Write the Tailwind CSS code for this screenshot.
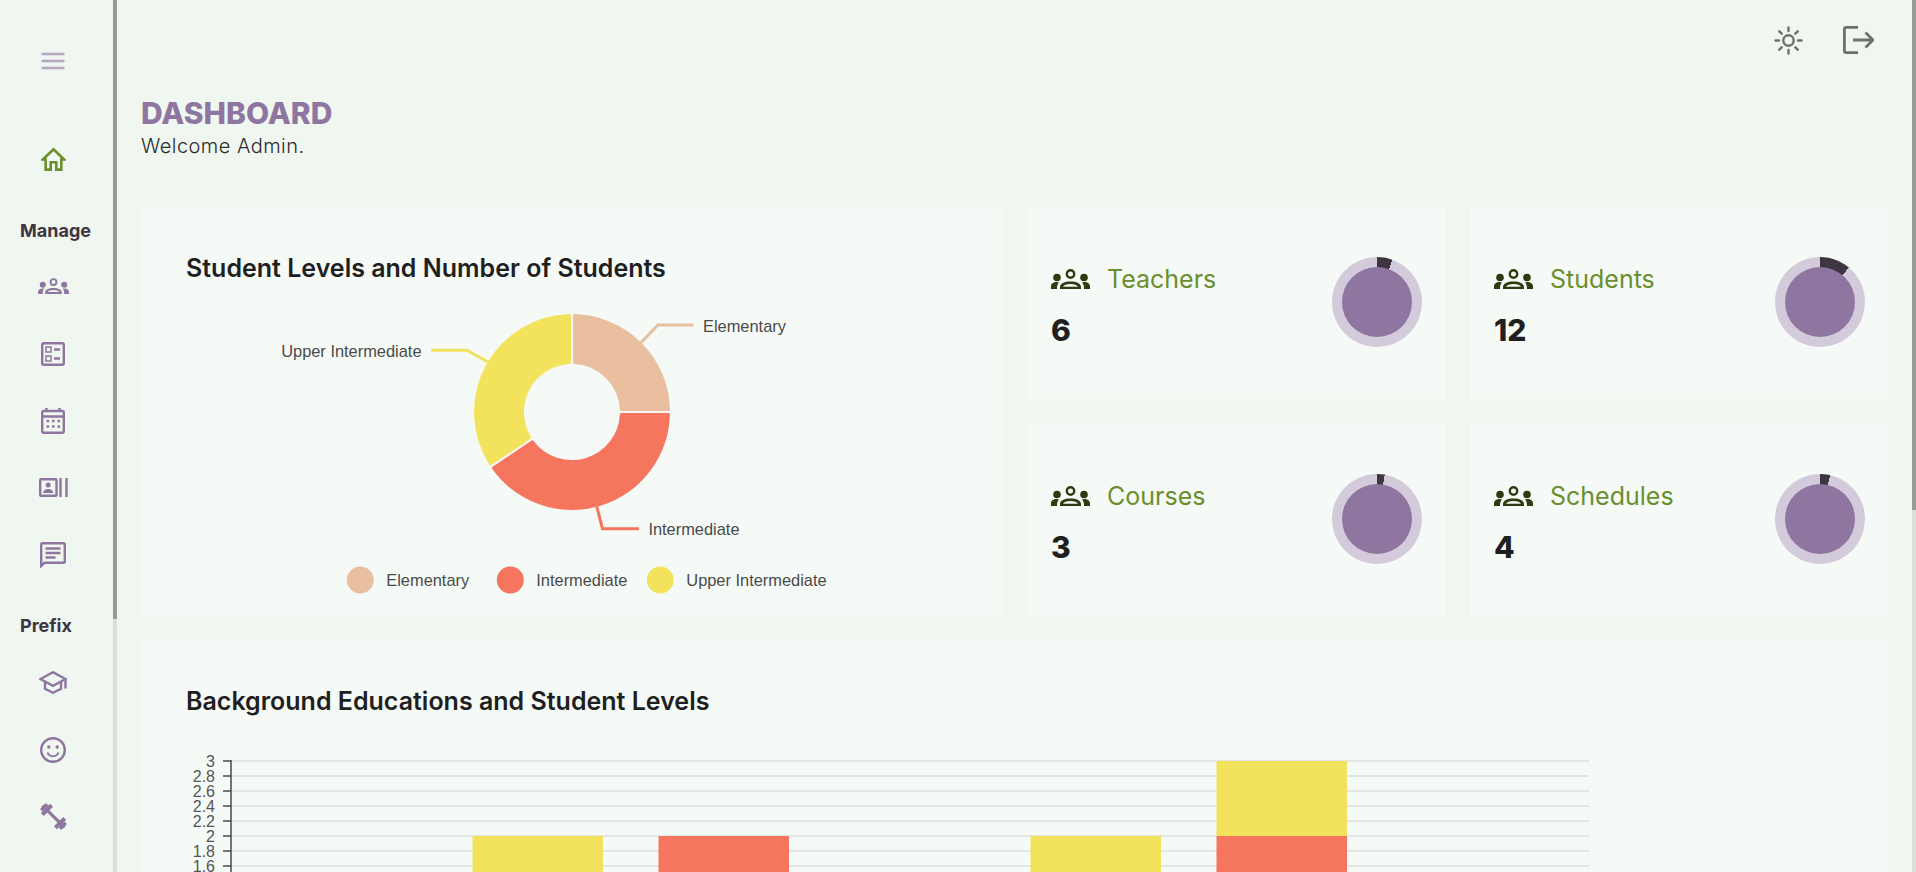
<!DOCTYPE html>
<html lang="en">
<head>
  <meta charset="UTF-8" />
  <title>Dashboard</title>
  <script src="https://cdn.jsdelivr.net/npm/@tailwindcss/browser@4"></script>
</head>
<body class="h-screen overflow-hidden bg-[#f0f6f0] font-['Inter',sans-serif] text-[#222]">
<div class="flex h-[872px] overflow-hidden">

  <!-- sidebar -->
  <aside class="w-[113px] shrink-0 h-[872px] overflow-hidden text-[#8f76a0]">
    <div class="h-[122px] w-[106px] flex items-center justify-center">
      <svg class="w-[24px] h-[24px] text-[#b5a9bf]" viewBox="0 0 24 24" fill="none" stroke="currentColor" stroke-width="2.600"><path d="M0.500 5h23M0.500 12h23M0.500 19h23"/></svg>
    </div>
    <div class="h-[74px] w-[106px] flex items-center justify-center">
      <svg class="w-[25px] h-[24px] text-[#6b8e2f]" viewBox="0 0 26 26" fill="none" stroke="currentColor" stroke-width="2.800"><path d="M1.500 13.500 13 2.500l11.500 11h-3V24.500h-5.500v-8h-6v8H4.500V13.500z"/></svg>
    </div>
    <div class="mt-[21px] pl-[20px] text-[18px] leading-[27px] font-bold text-[#3d3540]">Manage</div>
    <div class="mt-[22px] h-[40px] w-[106px] flex items-center justify-center">
      <svg class="w-[31px] h-[16px]" viewBox="0 0 39 20" fill="currentColor"><circle cx="6" cy="8.500" r="3.800"/><circle cx="33" cy="8.500" r="3.800"/><path d="M0 20v-2.500c0-2.800 2.500-4.500 5.500-4.500 1 0 1.800.2 2.500.5-1.500 1.500-2 3-2 6.500zM39 20v-2.500c0-2.800-2.500-4.500-5.500-4.500-1 0-1.800.2-2.500.5 1.500 1.500 2 3 2 6.500z"/><circle cx="19.500" cy="5" r="3.700" fill="none" stroke="currentColor" stroke-width="2.400"/><path d="M9 20v-2c0-3.500 4.500-5.500 10.500-5.500S30 14.500 30 18v2zm3-2.300h15c-.6-1.500-3.500-2.700-7.500-2.700s-6.900 1.200-7.500 2.700z" fill-rule="evenodd"/></svg>
    </div>
    <div class="mt-[14px] h-[67px] w-[106px] flex items-center justify-center">
      <svg class="w-[24px] h-[24px]" viewBox="0 0 24 24" fill="none" stroke="currentColor" stroke-width="2.400"><rect x="1.200" y="1.200" width="21.600" height="21.600" rx="1.500"/><rect x="5" y="5" width="5" height="5" stroke-width="1.500"/><rect x="5" y="14" width="5" height="5" stroke-width="1.500"/><path d="M13 7.500h6M13 16.500h6"/></svg>
    </div>
    <div class="h-[67px] w-[106px] flex items-center justify-center">
      <svg class="w-[24px] h-[26px]" viewBox="0 0 24 26" fill="none" stroke="currentColor" stroke-width="2.400"><rect x="1.200" y="3" width="21.600" height="21.800" rx="1.500"/><path d="M1 8.500h22M5.500 0v4M18.500 0v4"/><path d="M5.500 13h2.500M11 13h2.500M16.500 13h2.500M5.500 18.500h2.500M11 18.500h2.500M16.500 18.500h2.500" stroke-width="2.600"/></svg>
    </div>
    <div class="h-[67px] w-[106px] flex items-center justify-center">
      <svg class="w-[29px] h-[19px]" viewBox="0 0 29 19" fill="none" stroke="currentColor" stroke-width="2.400"><rect x="1.200" y="1.200" width="16.300" height="16.600" rx="1"/><circle cx="9.200" cy="7" r="2.500" fill="currentColor" stroke="none"/><path d="M4 15c.5-3 2.500-4 5.200-4s4.700 1 5.200 4z" fill="currentColor" stroke="none"/><path d="M21.500 0v19M27.500 0v19"/></svg>
    </div>
    <div class="h-[67px] w-[106px] flex items-center justify-center">
      <svg class="w-[26px] h-[26px]" viewBox="0 0 26 26" fill="none" stroke="currentColor" stroke-width="2.400"><path d="M1.200 24V2.500c0-.9.400-1.300 1.300-1.300h21c.9 0 1.300.4 1.300 1.300v17c0 .9-.4 1.300-1.300 1.300H4.500z"/><path d="M5.500 6.500h15M5.500 11h15M5.500 15.500h10"/></svg>
    </div>
    <div class="mt-[24px] pl-[20px] text-[18px] leading-[27px] font-bold text-[#3d3540]">Prefix</div>
    <div class="h-[67px] mt-[10px] w-[106px] flex items-center justify-center">
      <svg class="w-[28px] h-[23px]" viewBox="0 0 28 23" fill="none" stroke="currentColor" stroke-width="2.400"><path d="M1.500 8 14 1.200 26.500 8 14 14.800z"/><path d="M6 10.500v7.200l8 4 8-4v-7.200M26.500 8v9.500"/></svg>
    </div>
    <div class="h-[67px] w-[106px] flex items-center justify-center">
      <svg class="w-[26px] h-[26px]" viewBox="0 0 26 26" fill="none" stroke="currentColor" stroke-width="2.400"><circle cx="13" cy="13" r="11.800"/><circle cx="8.800" cy="10" r="1.700" fill="currentColor" stroke="none"/><circle cx="17.200" cy="10" r="1.700" fill="currentColor" stroke="none"/><path d="M7.500 15.500c1 2.500 3 3.700 5.500 3.700s4.500-1.200 5.500-3.700" stroke-width="2"/></svg>
    </div>
    <div class="h-[67px] w-[106px] flex items-center justify-center">
      <svg class="w-[31px] h-[31px]" viewBox="0 0 26 26" fill="currentColor"><g transform="rotate(45 13 13)"><rect x="0" y="11.700" width="26" height="2.600"/><rect x="3.500" y="7.500" width="3.500" height="11"/><rect x="0.500" y="9.500" width="3" height="7"/><rect x="19" y="7.500" width="3.500" height="11"/><rect x="22.500" y="9.500" width="3" height="7"/></g></svg>
    </div>
    <div class="h-[40px] w-[106px] flex justify-center pt-[22px]">
      <svg class="w-[6px] h-[6px]" viewBox="0 0 6 6" fill="currentColor"><path d="M3 0 6 4H0z"/></svg>
    </div>
  </aside>

  <!-- sidebar scrollbar -->
  <div class="w-[4px] shrink-0 bg-[#dcdedc]"><div class="h-[619px] bg-[#999b99]"></div></div>

  <!-- main -->
  <main class="w-[1795px] shrink-0 px-[24px]">
    <div class="h-[80px] flex items-center justify-end gap-[40px] pr-[14px] text-[#6f6f6f]">
      <svg class="w-[29px] h-[29px]" viewBox="0 0 29 29" fill="none" stroke="currentColor" stroke-width="2.400" stroke-linecap="round"><circle cx="14.500" cy="14.500" r="5.200" stroke-width="2.400"/><path d="M14.500 1.500v3.500M14.500 24v3.500M1.500 14.500H5M24 14.500h3.500M5.300 5.300l2.400 2.400M21.300 21.300l2.400 2.400M5.300 23.700l2.400-2.400M21.300 7.700l2.400-2.400"/></svg>
      <svg class="w-[31px] h-[28px]" viewBox="0 0 31 28" fill="none" stroke="currentColor" stroke-width="2.800"><path d="M15 1.400H3C1.800 1.400 1.400 1.800 1.400 3v22c0 1.200.4 1.600 1.600 1.600h12"/><path d="M10 14h19M22.500 6.500 30 14l-7.500 7.500"/></svg>
    </div>

    <h1 class="mt-[15px] text-[30px] leading-[36px] font-extrabold text-[#8f76a0] uppercase">Dashboard</h1>
    <p class="text-[20px] leading-[30px] font-light text-[#2b2b2b] tracking-[0.45px]">Welcome Admin.</p>

    <div class="mt-[46px] grid grid-cols-[862px_419px_419px] grid-rows-[192px_192px] gap-x-[24px] gap-y-[25px]">
      <!-- donut card -->
      <section class="row-span-2 bg-[#f5faf6] pl-[45px] pt-[47px]">
        <h2 class="text-[25px] leading-[28px] font-semibold text-[#1f1f1f] h-[46px]">Student Levels and Number of Students</h2>
        <svg class="block w-[780px] h-[316px] font-['Liberation_Sans',sans-serif] text-[16.400px]" viewBox="186 300 780 316" fill="#4a4a4a">
          <g stroke-width="3" stroke-linejoin="round">
            <path fill="#e9bfa0" stroke="#e9bfa0" d="M574.500 315.600 A96.500 96.500 0 0 1 668.500 409.500 L621.400 409.500 A49.500 49.500 0 0 0 574.500 362.600 Z"/>
            <path fill="#f6755f" stroke="#f6755f" d="M668.400 414.500 A96.500 96.500 0 0 1 493.400 468 L532.400 441.800 A49.500 49.500 0 0 0 621.400 414.500 Z"/>
            <path fill="#f3e25b" stroke="#f3e25b" d="M490.600 463.800 A96.500 96.500 0 0 1 569.500 315.600 L569.500 362.600 A49.500 49.500 0 0 0 529.600 437.600 Z"/>
          </g>
          <g fill="none" stroke-width="3">
            <path stroke="#e9bfa0" d="M640.800 342.700 658 325h35.600"/>
            <path stroke="#f3e25b" d="M487.700 361.700 466.700 350.300H431"/>
            <path stroke="#f6755f" d="M596.800 506.700 602.500 528.700h36.400"/>
          </g>
          <text x="703" y="332">Elementary</text>
          <text x="421.500" y="357" text-anchor="end">Upper Intermediate</text>
          <text x="648.400" y="535">Intermediate</text>
          <circle cx="360.300" cy="580" r="13.500" fill="#e9bfa0"/>
          <circle cx="510.300" cy="580" r="13.500" fill="#f6755f"/>
          <circle cx="660.300" cy="580" r="13.500" fill="#f3e25b"/>
          <text x="386.300" y="586">Elementary</text>
          <text x="536.300" y="586">Intermediate</text>
          <text x="686.300" y="586">Upper Intermediate</text>
        </svg>
      </section>

      <!-- stat cards -->
      <section class="bg-[#f5faf6] pl-[24px] pr-[24px] flex items-center justify-between">
        <div class="mt-[4px]">
          <div class="flex items-center gap-[17px] h-[32px]">
            <svg class="w-[39px] h-[20px] text-[#2d3b10]" viewBox="0 0 39 20" fill="currentColor"><circle cx="6" cy="8.500" r="3.800"/><circle cx="33" cy="8.500" r="3.800"/><path d="M0 20v-2.500c0-2.800 2.500-4.500 5.500-4.500 1 0 1.800.2 2.500.5-1.500 1.500-2 3-2 6.500zM39 20v-2.500c0-2.800-2.500-4.500-5.500-4.500-1 0-1.800.2-2.500.5 1.500 1.500 2 3 2 6.500z"/><circle cx="19.500" cy="5" r="3.700" fill="none" stroke="currentColor" stroke-width="2.400"/><path d="M9 20v-2c0-3.500 4.500-5.500 10.500-5.500S30 14.500 30 18v2zm3-2.300h15c-.6-1.500-3.500-2.700-7.500-2.700s-6.900 1.200-7.500 2.700z" fill-rule="evenodd"/></svg>
            <span class="text-[25px] leading-[32px] font-normal text-[#6b8e2f]">Teachers</span>
          </div>
          <p class="mt-[17px] text-[30px] leading-[36px] font-extrabold text-[#1f1f1f]">6</p>
        </div>
        <div class="-mt-[3px] w-[90px] h-[90px] rounded-full flex items-center justify-center bg-[conic-gradient(#3d3540_0deg_20deg,#d3cbdb_20deg)]"><div class="w-[70px] h-[70px] rounded-full bg-[#8f76a0]"></div></div>
      </section>

      <section class="bg-[#f5faf6] pl-[24px] pr-[24px] flex items-center justify-between">
        <div class="mt-[4px]">
          <div class="flex items-center gap-[17px] h-[32px]">
            <svg class="w-[39px] h-[20px] text-[#2d3b10]" viewBox="0 0 39 20" fill="currentColor"><circle cx="6" cy="8.500" r="3.800"/><circle cx="33" cy="8.500" r="3.800"/><path d="M0 20v-2.500c0-2.800 2.500-4.500 5.500-4.500 1 0 1.800.2 2.500.5-1.500 1.500-2 3-2 6.500zM39 20v-2.500c0-2.800-2.500-4.500-5.500-4.500-1 0-1.800.2-2.500.5 1.500 1.500 2 3 2 6.500z"/><circle cx="19.500" cy="5" r="3.700" fill="none" stroke="currentColor" stroke-width="2.400"/><path d="M9 20v-2c0-3.500 4.500-5.500 10.500-5.500S30 14.500 30 18v2zm3-2.300h15c-.6-1.500-3.500-2.700-7.500-2.700s-6.900 1.200-7.500 2.700z" fill-rule="evenodd"/></svg>
            <span class="text-[25px] leading-[32px] font-normal text-[#6b8e2f]">Students</span>
          </div>
          <p class="mt-[17px] text-[30px] leading-[36px] font-extrabold text-[#1f1f1f]">12</p>
        </div>
        <div class="-mt-[3px] w-[90px] h-[90px] rounded-full flex items-center justify-center bg-[conic-gradient(#3d3540_0deg_40deg,#d3cbdb_40deg)]"><div class="w-[70px] h-[70px] rounded-full bg-[#8f76a0]"></div></div>
      </section>

      <section class="bg-[#f5faf6] pl-[24px] pr-[24px] flex items-center justify-between">
        <div class="mt-[4px]">
          <div class="flex items-center gap-[17px] h-[32px]">
            <svg class="w-[39px] h-[20px] text-[#2d3b10]" viewBox="0 0 39 20" fill="currentColor"><circle cx="6" cy="8.500" r="3.800"/><circle cx="33" cy="8.500" r="3.800"/><path d="M0 20v-2.500c0-2.800 2.500-4.500 5.500-4.500 1 0 1.800.2 2.500.5-1.500 1.500-2 3-2 6.500zM39 20v-2.500c0-2.800-2.500-4.500-5.500-4.500-1 0-1.800.2-2.500.5 1.500 1.500 2 3 2 6.500z"/><circle cx="19.500" cy="5" r="3.700" fill="none" stroke="currentColor" stroke-width="2.400"/><path d="M9 20v-2c0-3.500 4.500-5.500 10.500-5.500S30 14.500 30 18v2zm3-2.300h15c-.6-1.500-3.500-2.700-7.500-2.700s-6.900 1.200-7.500 2.700z" fill-rule="evenodd"/></svg>
            <span class="text-[25px] leading-[32px] font-normal text-[#6b8e2f]">Courses</span>
          </div>
          <p class="mt-[17px] text-[30px] leading-[36px] font-extrabold text-[#1f1f1f]">3</p>
        </div>
        <div class="-mt-[3px] w-[90px] h-[90px] rounded-full flex items-center justify-center bg-[conic-gradient(#3d3540_0deg_10deg,#d3cbdb_10deg)]"><div class="w-[70px] h-[70px] rounded-full bg-[#8f76a0]"></div></div>
      </section>

      <section class="bg-[#f5faf6] pl-[24px] pr-[24px] flex items-center justify-between">
        <div class="mt-[4px]">
          <div class="flex items-center gap-[17px] h-[32px]">
            <svg class="w-[39px] h-[20px] text-[#2d3b10]" viewBox="0 0 39 20" fill="currentColor"><circle cx="6" cy="8.500" r="3.800"/><circle cx="33" cy="8.500" r="3.800"/><path d="M0 20v-2.500c0-2.800 2.500-4.500 5.500-4.500 1 0 1.800.2 2.500.5-1.500 1.500-2 3-2 6.500zM39 20v-2.500c0-2.800-2.500-4.500-5.500-4.500-1 0-1.800.2-2.500.5 1.500 1.500 2 3 2 6.500z"/><circle cx="19.500" cy="5" r="3.700" fill="none" stroke="currentColor" stroke-width="2.400"/><path d="M9 20v-2c0-3.500 4.500-5.500 10.500-5.500S30 14.500 30 18v2zm3-2.300h15c-.6-1.500-3.500-2.700-7.500-2.700s-6.900 1.200-7.500 2.700z" fill-rule="evenodd"/></svg>
            <span class="text-[25px] leading-[32px] font-normal text-[#6b8e2f]">Schedules</span>
          </div>
          <p class="mt-[17px] text-[30px] leading-[36px] font-extrabold text-[#1f1f1f]">4</p>
        </div>
        <div class="-mt-[3px] w-[90px] h-[90px] rounded-full flex items-center justify-center bg-[conic-gradient(#3d3540_0deg_13deg,#d3cbdb_13deg)]"><div class="w-[70px] h-[70px] rounded-full bg-[#8f76a0]"></div></div>
      </section>
    </div>

    <!-- bar chart card -->
    <section class="mt-[24px] h-[400px] bg-[#f5faf6] pl-[45px] pt-[47px]">
      <h2 class="text-[25px] leading-[28px] font-semibold text-[#1f1f1f]">Background Educations and Student Levels</h2>
      <svg class="block mt-[35px] w-[1500px] h-[130px] font-['Liberation_Sans',sans-serif] text-[16px]" viewBox="186 750 1500 130" fill="#555555">
        <g stroke="#e4e6e3" stroke-width="2">
          <path d="M231 761H1589M231 776H1589M231 791H1589M231 806H1589M231 821H1589M231 836H1589M231 851H1589M231 866H1589"/>
        </g>
        <path d="M223 761h8M223 776h8M223 791h8M223 806h8M223 821h8M223 836h8M223 851h8M223 866h8M231 760V880" stroke="#4a4a4a" stroke-width="1.500" fill="none"/>
        <g text-anchor="end">
          <text x="215" y="767">3</text><text x="215" y="782">2.8</text><text x="215" y="797">2.6</text><text x="215" y="812">2.4</text>
          <text x="215" y="827">2.2</text><text x="215" y="842">2</text><text x="215" y="857">1.8</text><text x="215" y="872">1.6</text>
        </g>
        <rect x="472.500" y="836" width="130.500" height="44" fill="#f3e25b"/>
        <rect x="658.500" y="836" width="130.500" height="44" fill="#f6755f"/>
        <rect x="1030.500" y="836" width="130.500" height="44" fill="#f3e25b"/>
        <rect x="1216.500" y="761" width="130.500" height="75" fill="#f3e25b"/>
        <rect x="1216.500" y="836" width="130.500" height="44" fill="#f6755f"/>
      </svg>
    </section>
  </main>

  <!-- page scrollbar -->
  <div class="w-[4px] shrink-0 bg-[#dcdedc]"><div class="h-[510px] bg-[#999b99]"></div></div>
</div>
</body>
</html>
